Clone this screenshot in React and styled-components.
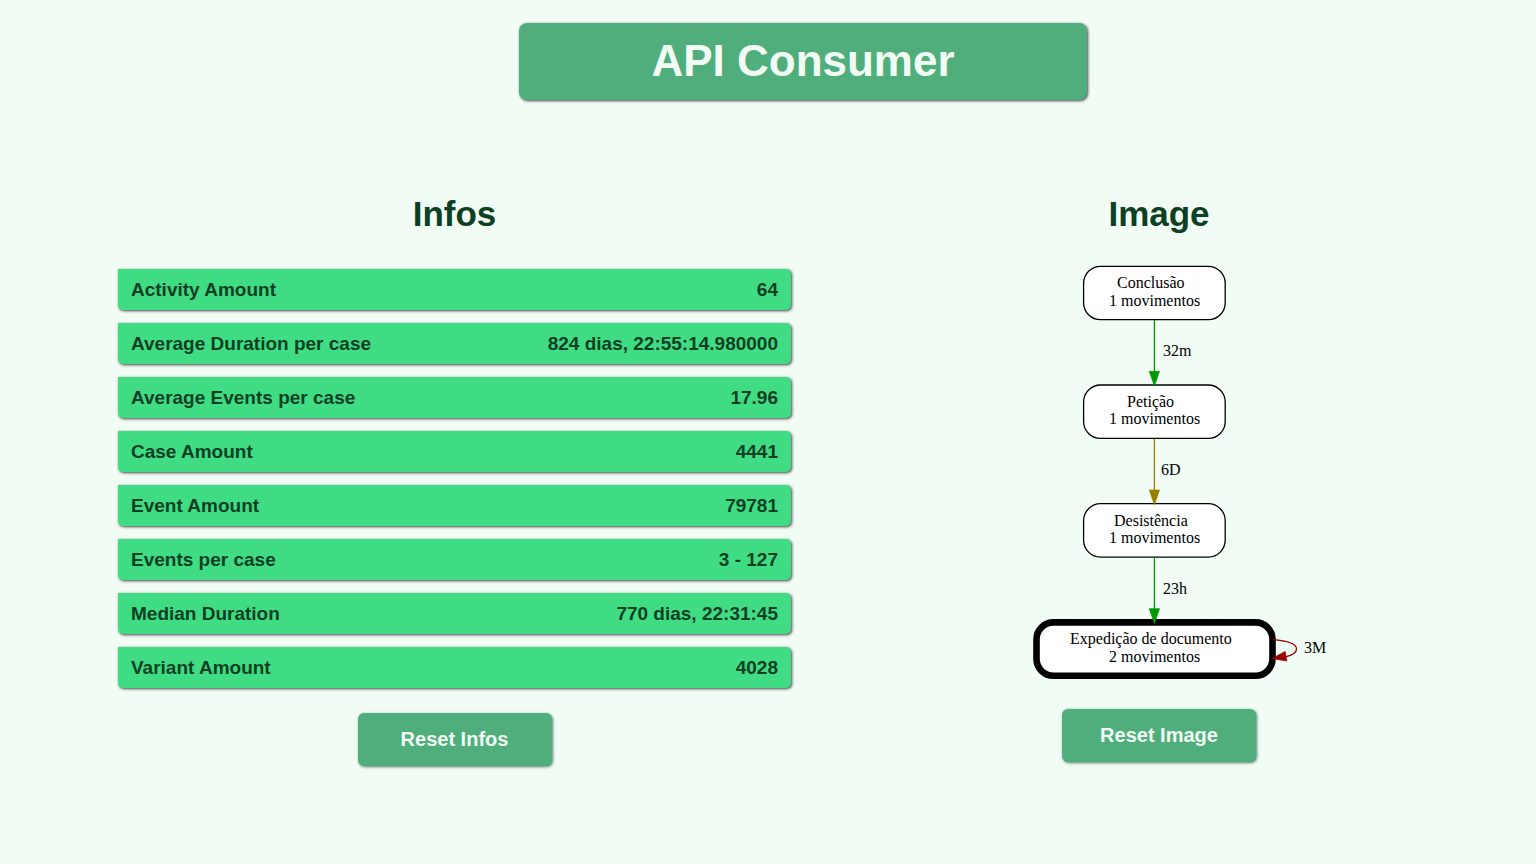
import React from "react";
import styled, { createGlobalStyle } from "styled-components";

const GlobalStyle = createGlobalStyle`
  * { box-sizing: border-box; }
  body {
    margin: 0;
    background: #f1fcf5;
    color: #0d4023;
    font-family: "Liberation Sans", Arial, sans-serif;
  }
`;

const Page = styled.div`
  padding: 23px 48px 32px 118px;
`;

const Banner = styled.header`
  width: 568px;
  max-width: 100%;
  margin: 0 auto 94px;
  padding: 12px 24px 14px;
  border-radius: 8px;
  background: #50ae7c;
  box-shadow: 1px 1px 3px #444;
`;

const Title = styled.h1`
  margin: 0;
  color: #f1fcf5;
  font-size: 44px;
  line-height: 51px;
  text-align: center;
`;

const Columns = styled.main`
  display: grid;
  grid-template-columns: minmax(0, 673fr) minmax(0, 658fr);
  column-gap: 39px;
  align-items: start;
`;

const Section = styled.section`
  display: flex;
  flex-direction: column;
  align-items: center;
`;

const SectionTitle = styled.h2`
  margin: 0 0 28px;
  font-size: 35px;
  line-height: 40px;
`;

const InfoList = styled.dl`
  display: flex;
  flex-direction: column;
  gap: 13px;
  width: 100%;
  margin: 7px 0 25px;
`;

const InfoRow = styled.div`
  display: flex;
  justify-content: space-between;
  padding: 9px 13px;
  border-radius: 0 5px 5px 5px;
  background: #40dc84;
  box-shadow: 1px 1px 3px #444;
  font-size: 19px;
  font-weight: 700;
  line-height: 23px;
`;

const InfoName = styled.dt``;

const InfoValue = styled.dd`
  margin: 0;
`;

const Button = styled.button`
  width: 194px;
  padding: 15px 0;
  border: 0;
  border-radius: 6px;
  background: #50ae7c;
  box-shadow: 1px 1px 3px #52826a;
  color: #f1fcf5;
  font: 700 20px/23px "Liberation Sans", Arial, sans-serif;
  cursor: pointer;
`;

const Graph = styled.svg`
  display: block;
  width: 344px;
  height: 422px;
  max-width: 100%;
  margin-bottom: 25px;
  font-family: "Liberation Serif", "Times New Roman", serif;
  font-size: 16px;
  fill: #000;
`;

const infos = [
  ["Activity Amount", "64"],
  ["Average Duration per case", "824 dias, 22:55:14.980000"],
  ["Average Events per case", "17.96"],
  ["Case Amount", "4441"],
  ["Event Amount", "79781"],
  ["Events per case", "3 - 127"],
  ["Median Duration", "770 dias, 22:31:45"],
  ["Variant Amount", "4028"],
];

const nodes = [
  { name: "Conclusão", count: "1 movimentos", x: 96.6, y: 4.3, w: 141.6, line: 1.3, textX: 130, textY: 26, countY: 44 },
  { name: "Petição", count: "1 movimentos", x: 96.6, y: 123, w: 141.6, line: 1.3, textX: 140, textY: 145, countY: 162 },
  { name: "Desistência", count: "1 movimentos", x: 96.6, y: 241.7, w: 141.6, line: 1.3, textX: 127, textY: 264, countY: 281 },
  { name: "Expedição de documento", count: "2 movimentos", x: 49.5, y: 360.4, w: 236, line: 6.6, textX: 83, textY: 382, countY: 400 },
];

const edges = [
  { label: "32m", color: "#009900", y: 58, labelX: 176, labelY: 94 },
  { label: "6D", color: "#997f00", y: 176.7, labelX: 174, labelY: 213 },
  { label: "23h", color: "#009900", y: 295.4, labelX: 176, labelY: 332 },
];

function ProcessGraph() {
  return (
    <Graph viewBox="0 0 344 422" role="img" aria-label="Process graph">
      {nodes.map((n) => (
        <g key={n.name}>
          <rect x={n.x} y={n.y} width={n.w} height="53.4" rx="17" fill="#fff" stroke="#000" strokeWidth={n.line} />
          <text x={n.textX} y={n.textY}>{n.name}</text>
          <text x="122" y={n.countY}>{n.count}</text>
        </g>
      ))}
      {edges.map((e) => (
        <g key={e.label}>
          <path d={`M167.4 ${e.y}v52`} stroke={e.color} strokeWidth="1.3" />
          <path d={`M162.3 ${e.y + 51.3}h10.2l-5.1 14.8z`} fill={e.color} stroke={e.color} strokeWidth=".7" />
          <text x={e.labelX} y={e.labelY}>{e.label}</text>
        </g>
      ))}
      <path d="M285.5 377.6C299 378.6 309.5 381.5 309.5 387C309.5 390.7 305 393.3 298.5 394.8" fill="none" stroke="#990000" strokeWidth="1.3" />
      <path d="M285 396.6L298.2 389.4L299.8 399z" fill="#990000" stroke="#990000" strokeWidth=".7" />
      <text x="317" y="391">3M</text>
    </Graph>
  );
}

export default function App() {
  return (
    <>
      <GlobalStyle />
      <Page>
        <Banner>
          <Title>API Consumer</Title>
        </Banner>
        <Columns>
          <Section>
            <SectionTitle>Infos</SectionTitle>
            <InfoList>
              {infos.map(([name, value]) => (
                <InfoRow key={name}>
                  <InfoName>{name}</InfoName>
                  <InfoValue>{value}</InfoValue>
                </InfoRow>
              ))}
            </InfoList>
            <Button type="button">Reset Infos</Button>
          </Section>
          <Section>
            <SectionTitle>Image</SectionTitle>
            <ProcessGraph />
            <Button type="button">Reset Image</Button>
          </Section>
        </Columns>
      </Page>
    </>
  );
}
